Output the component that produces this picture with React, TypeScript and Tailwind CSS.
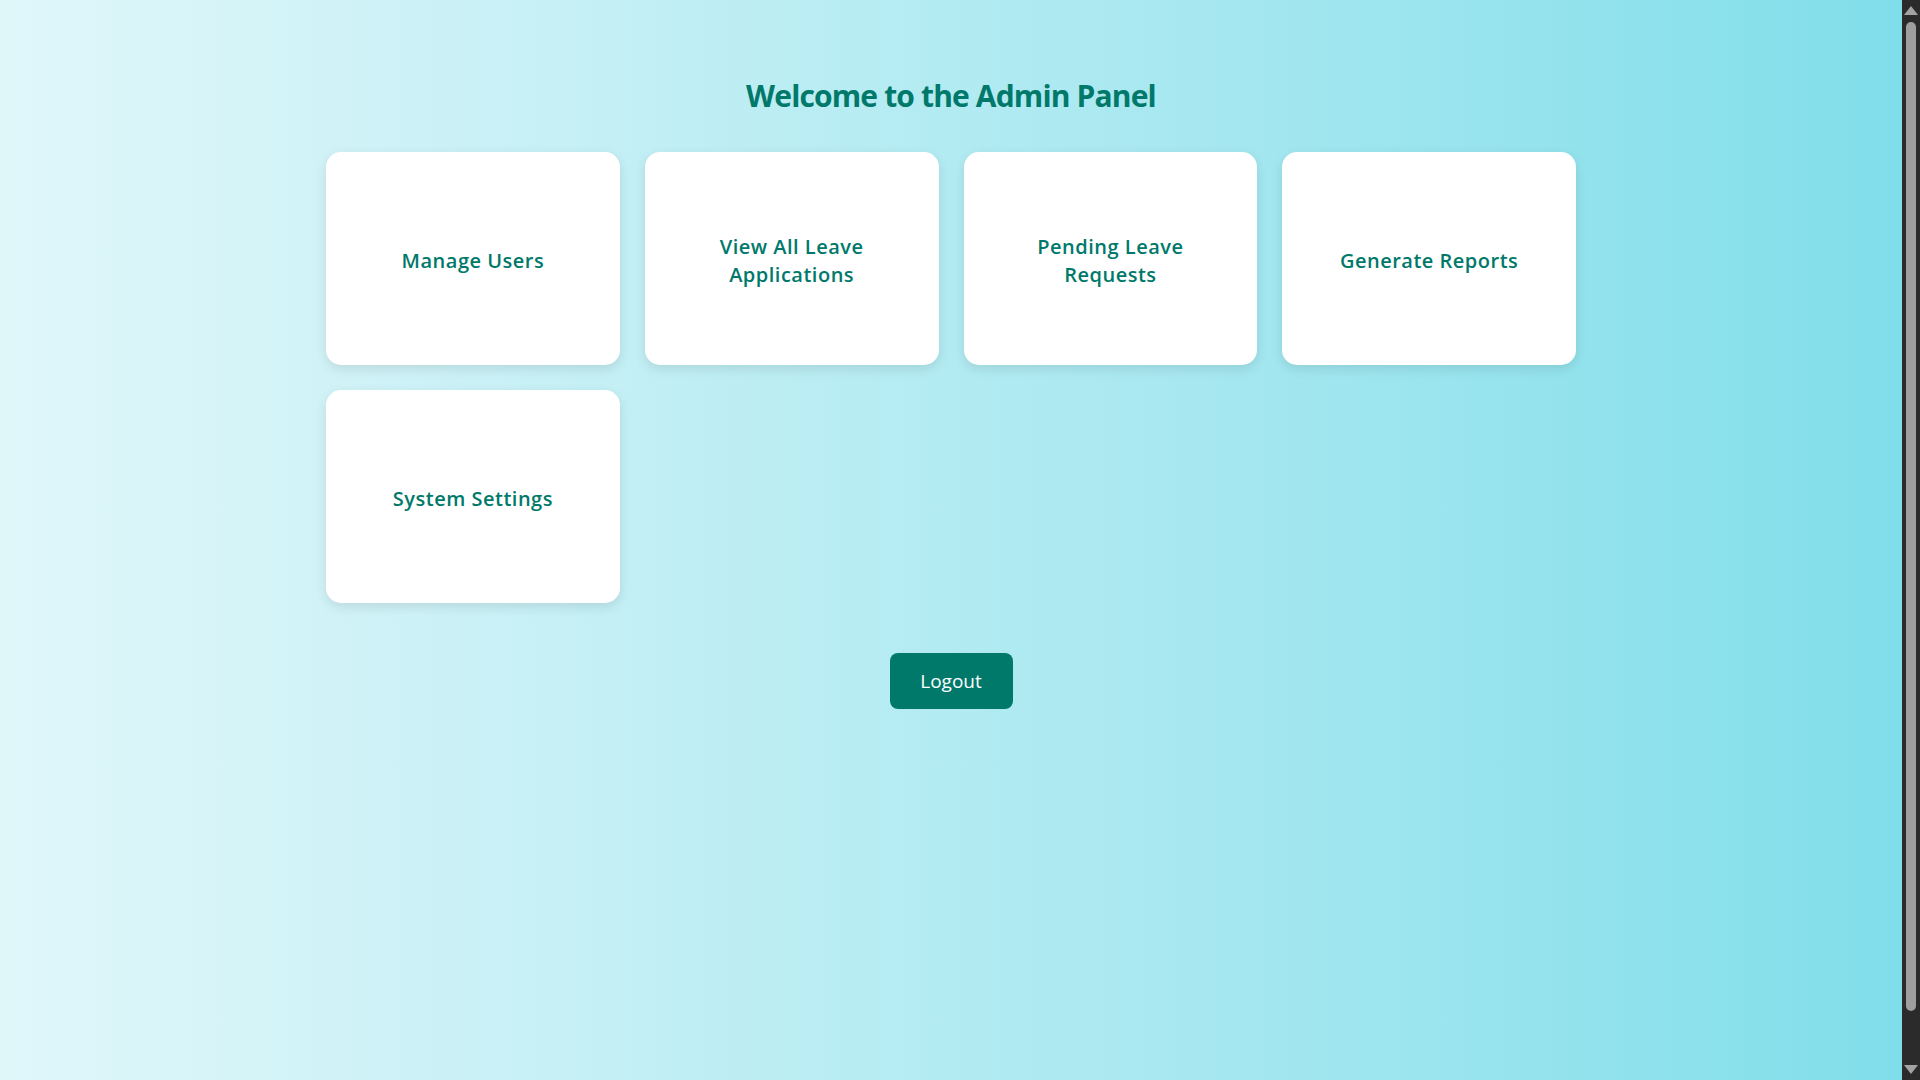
import React from "react";

const cards = [
  "Manage Users",
  "View All Leave Applications",
  "Pending Leave Requests",
  "Generate Reports",
  "System Settings",
];

function FakeScrollbar() {
  return (
    <div className="w-[18px] h-full bg-[#2b2b2b] flex flex-col items-center shrink-0">
      <div className="h-[22px] w-full flex items-start justify-center pt-[6px]">
        <svg width="14" height="9" viewBox="0 0 14 9">
          <polygon points="7,0 14,9 0,9" fill="#a3a3a3" />
        </svg>
      </div>
      <div className="w-[10px] h-[989px] rounded-full bg-[#9f9f9f]" />
      <div className="flex-1 w-full flex items-end justify-center pb-[6px]">
        <svg width="14" height="9" viewBox="0 0 14 9">
          <polygon points="0,0 14,0 7,9" fill="#a3a3a3" />
        </svg>
      </div>
    </div>
  );
}

export default function App() {
  return (
    <div
      className="h-screen w-full flex overflow-hidden"
      style={{ fontFamily: '"Open Sans", "Noto Sans", sans-serif' }}
    >
      <div className="flex-1 h-full bg-linear-to-r from-[#e0f7fa] to-[#80deea] flex flex-col items-center pt-[75px]">
        <h1 className="text-[30px] leading-[41px] font-bold text-[#00796b] tracking-[-0.85px]">
          Welcome to the Admin Panel
        </h1>
        <div className="w-[1250px] grid grid-cols-4 gap-[25px] mt-[36px]">
          {cards.map((c) => (
            <div
              key={c}
              className="h-[213px] bg-white rounded-[15px] shadow-[0_4px_12px_rgba(0,0,0,0.1)] flex items-center justify-center px-[40px] pt-[5px] text-center"
            >
              <span className="text-[20px] leading-[28px] font-semibold text-[#00796b] tracking-[0.5px]">
                {c}
              </span>
            </div>
          ))}
        </div>
        <button className="mt-[50px] w-[123px] h-[56px] rounded-[8px] bg-[#00796b] text-white text-[19px] flex items-center justify-center">
          Logout
        </button>
      </div>
      <FakeScrollbar />
    </div>
  );
}
